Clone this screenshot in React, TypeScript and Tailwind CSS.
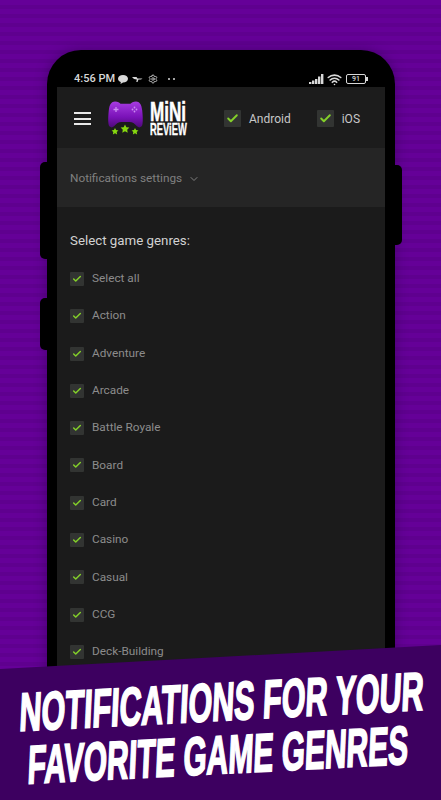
import React from 'react';
import { Check, ChevronDown, Settings, Wifi } from 'lucide-react';

const genres = ['Select all', 'Action', 'Adventure', 'Arcade', 'Battle Royale', 'Board', 'Card', 'Casino', 'Casual', 'CCG', 'Deck-Building'];

function Star({ x, y, r }: { x: number; y: number; r: number }) {
    const pts = Array.from({ length: 10 }, (_, i) => {
        const a = -Math.PI / 2 + (i * Math.PI) / 5;
        const d = i % 2 === 0 ? r : r * 0.5;
        return `${(x + Math.cos(a) * d).toFixed(2)},${(y + Math.sin(a) * d).toFixed(2)}`;
    }).join(' ');
    return <polygon points={pts} fill="#86d80f" />;
}

function Logo() {
    return (
        <svg width="35" height="35" viewBox="0 0 35 35" className="shrink-0">
            <defs>
                <linearGradient id="pad" x1="0" y1="0" x2="0" y2="1">
                    <stop offset="0" stopColor="#a63be0" />
                    <stop offset="0.6" stopColor="#7a12b8" />
                    <stop offset="1" stopColor="#4d0a78" />
                </linearGradient>
            </defs>
            <path transform="scale(1 1.1)" d="M7 0.500c3 0 4.500 1 5.500 2h10c1-1 2.500-2 5.500-2 3.500 0 5.500 2.500 6.200 8 .6 5 .8 9 .3 12.500-.4 3-3.500 4-5.500 2-2.500-2.700-4.500-4-7.500-4h-8c-3 0-5 1.300-7.500 4-2 2-5.100 1-5.500-2-.5-3.500-.3-7.500.3-12.500.7-5.500 2.700-8 6.200-8z" fill="url(#pad)" />
            <path d="M8 6v5M5.500 8.500h5" stroke="#c98cf0" strokeWidth="1.300" fill="none" />
            <circle cx="26.500" cy="6.500" r="0.900" fill="#c98cf0" />
            <circle cx="26.500" cy="10.500" r="0.900" fill="#c98cf0" />
            <circle cx="24.500" cy="8.500" r="0.900" fill="#c98cf0" />
            <circle cx="28.500" cy="8.500" r="0.900" fill="#c98cf0" />
            <Star x={7} y={30.500} r={3.600} />
            <Star x={17} y={28} r={4.600} />
            <Star x={27} y={30.500} r={3.600} />
        </svg>
    );
}

function Box({ size = 14 }: { size?: number }) {
    return (
        <span
            className="flex shrink-0 items-center justify-center rounded-[1px] bg-[#323432]"
            style={{ width: size, height: size }}
        >
            <Check size={size - 4} strokeWidth={3.500} className="text-[#84d02a]" />
        </span>
    );
}

function StatusBar() {
    return (
        <div className="flex h-[37px] items-end justify-between pb-[1px] pl-[17px] pr-[19px] text-[11px] font-medium text-[#d8d8d8]">
            <div className="flex h-[14px] items-center">
                <span className="leading-[14px]">4:56 PM</span>
                <svg width="10" height="9" viewBox="0 0 10 9" className="ml-[3px]">
                    <path d="M5 0c2.800 0 5 1.600 5 3.700S7.800 7.400 5 7.400L2.500 9l.3-2C1.100 6.400 0 5.200 0 3.700 0 1.600 2.200 0 5 0z" fill="#d8d8d8" />
                </svg>
                <svg width="11" height="7" viewBox="0 0 11 7" className="ml-[4px]">
                    <path d="M0 1h4.500l1 1.500h5L9 3.500H6.500L5.500 6H4.300l.5-2.500L2 3z" fill="#d8d8d8" />
                </svg>
                <Settings size={10} strokeWidth={2} className="ml-[5px]" />
                <span className="ml-[10px] flex gap-[3px]">
                    <span className="h-[2px] w-[2px] rounded-full bg-[#d8d8d8]" />
                    <span className="h-[2px] w-[2px] rounded-full bg-[#d8d8d8]" />
                </span>
            </div>
            <div className="flex h-[14px] items-center">
                <svg width="15" height="10" viewBox="0 0 15 10">
                    <rect x="0" y="8" width="2.400" height="2" fill="#d8d8d8" />
                    <rect x="3" y="6.500" width="2.400" height="3.500" fill="#d8d8d8" />
                    <rect x="6" y="5" width="2.400" height="5" fill="#d8d8d8" />
                    <rect x="9" y="2.500" width="2.400" height="7.500" fill="#d8d8d8" />
                    <rect x="12" y="0" width="2.400" height="10" fill="#d8d8d8" />
                </svg>
                <Wifi size={15} strokeWidth={2.600} className="ml-[3px]" />
                <span className="relative ml-[4px] flex h-[10px] w-[20px] items-center justify-center rounded-[2px] border border-[#d8d8d8] text-[7px] leading-none">
                    91
                    <span className="absolute right-[-3px] top-[2px] h-[4px] w-[2px] bg-[#d8d8d8]" />
                </span>
            </div>
        </div>
    );
}

export default function App() {
    return (
        <div className="relative h-[800px] w-[441px] overflow-hidden bg-[repeating-linear-gradient(180deg,#650098_0px,#650098_5px,#5f008f_5px,#5f008f_9px)] pl-[47px] pt-[50px] font-['Roboto',sans-serif]">
            {/* Phone */}
            <div className="relative h-[700px] w-[348px] rounded-t-[34px] bg-black px-[10px] shadow-[0_0_12px_rgba(40,0,70,0.5)]">
                <span className="absolute left-[-7px] top-[112px] h-[97px] w-[8px] rounded-l-[5px] bg-black" />
                <span className="absolute left-[-7px] top-[248px] h-[52px] w-[8px] rounded-l-[5px] bg-black" />
                <span className="absolute right-[-7px] top-[115px] h-[80px] w-[8px] rounded-r-[5px] bg-black" />

                <StatusBar />

                {/* Header */}
                <div className="flex h-[61px] items-center bg-[#1c1c1c] pl-[17px] pt-[2px]">
                    <div className="flex w-[17px] flex-col gap-[3.500px]">
                        <span className="h-[2px] bg-[#e8e8e8]" />
                        <span className="h-[2px] bg-[#e8e8e8]" />
                        <span className="h-[2px] bg-[#e8e8e8]" />
                    </div>
                    <div className="ml-[17px] flex"><Logo /></div>
                    <div className="ml-[7px] flex w-[37px] flex-col items-start font-['Liberation_Sans_Narrow','Liberation_Sans',sans-serif] font-bold text-white">
                        <span className="origin-left scale-x-[0.61] text-[28px] leading-[22px] [-webkit-text-stroke:0.6px_white]">MiNi</span>
                        <span className="origin-left scale-x-[0.55] text-[17px] leading-[14px] [-webkit-text-stroke:0.4px_white]">REViEW</span>
                    </div>
                    <div className="ml-[37px] flex items-center">
                        <Box size={17} />
                        <span className="ml-[8px] text-[12px] text-[#c8c8c8]">Android</span>
                    </div>
                    <div className="ml-[26px] flex items-center">
                        <Box size={17} />
                        <span className="ml-[8px] text-[12px] text-[#c8c8c8]">iOS</span>
                    </div>
                </div>

                {/* Notifications settings */}
                <div className="flex h-[59px] items-center gap-[6px] bg-[#252525] pl-[13px] pt-[2px] text-[11.800px] text-[#808080]">
                    Notifications settings
                    <ChevronDown size={12} />
                </div>

                {/* Genres */}
                <div className="h-[493px] bg-[#1b1b1b] pl-[13px] pt-[25px]">
                    <div className="text-[13.300px] leading-[18px] text-[#d2d2d2]">Select game genres:</div>
                    <div className="mt-[22px] flex flex-col gap-[23.300px]">
                        {genres.map((g) => (
                            <div key={g} className="flex h-[14px] items-center gap-[8px] text-[11.800px] text-[#8c8c8c]">
                                <Box />
                                {g}
                            </div>
                        ))}
                    </div>
                </div>
            </div>

            {/* Banner */}
            <div className="absolute inset-x-0 bottom-0 h-[155px] bg-[#3d0060] [clip-path:polygon(0_24px,100%_0,100%_100%,0_100%)]" />
            <div className="absolute left-[21px] top-[686px] w-[420px] origin-left rotate-[-3deg] font-['Liberation_Sans_Narrow','Liberation_Sans',sans-serif] text-[54px] font-bold leading-[53px] whitespace-nowrap text-white [-webkit-text-stroke:1.800px_white]">
                <div className="origin-left scale-x-[0.566] skew-x-[-10deg]">NOTIFICATIONS FOR YOUR</div>
                <div className="origin-left scale-x-[0.555] skew-x-[-10deg] pl-[10px]">FAVORITE GAME GENRES</div>
            </div>
        </div>
    );
}
